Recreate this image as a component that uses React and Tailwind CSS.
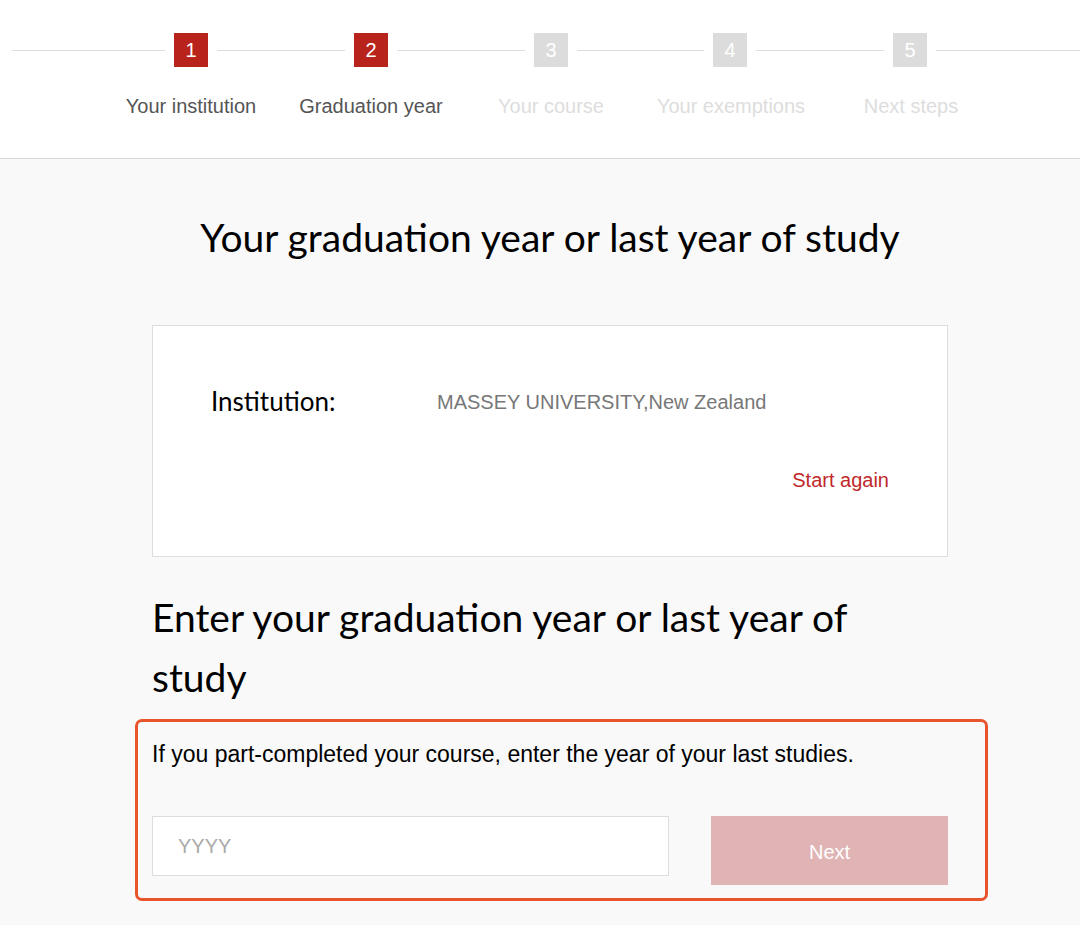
import React from 'react'

const steps = [
    { n: 1, label: 'Your institution', done: true },
    { n: 2, label: 'Graduation year', done: true },
    { n: 3, label: 'Your course', done: false },
    { n: 4, label: 'Your exemptions', done: false },
    { n: 5, label: 'Next steps', done: false },
]

const helv = { fontFamily: '"Liberation Sans", Arial, sans-serif' }
const avenir = { fontFamily: 'Lato, "Noto Sans", sans-serif' }

const StepBox = ({ step }) => (
    <div
        className={`w-[34px] h-[34px] flex items-center justify-center text-[20px] text-white flex-shrink-0 ${step.done ? 'bg-[#b8241c]' : 'bg-[#dcdcdc]'}`}
    >
        {step.n}
    </div>
)

const Line = ({ className }) => <div className={`h-px bg-[#dedede] ${className}`} />

export default function App() {
    return (
        <div className="min-h-[925px] bg-[#f9f9f9]" style={helv}>
            {/* Stepper */}
            <header className="bg-white border-b border-[#d8d8d8] h-[159px] pt-[33px]">
                <div className="flex items-center gap-[9px] pl-[12px]">
                    <Line className="w-[153px]" />
                    <StepBox step={steps[0]} />
                    <Line className="w-[128px]" />
                    <StepBox step={steps[1]} />
                    <Line className="w-[128px]" />
                    <StepBox step={steps[2]} />
                    <Line className="w-[127px]" />
                    <StepBox step={steps[3]} />
                    <Line className="w-[128px]" />
                    <StepBox step={steps[4]} />
                    <Line className="flex-1" />
                </div>
                <div className="flex ml-[101px] mt-[27px]">
                    {steps.map((s) => (
                        <div
                            key={s.n}
                            className={`w-[180px] text-center text-[20px] leading-[24px] whitespace-nowrap ${s.done ? 'text-[#555555]' : 'text-[#dddddd]'}`}
                        >
                            {s.label}
                        </div>
                    ))}
                </div>
            </header>

            <main className="w-[796px] ml-[152px]">
                <h1 className="text-center text-[39px] text-black pt-[54px] leading-[48px] whitespace-nowrap" style={avenir}>
                    Your graduation year or last year of study
                </h1>

                {/* Selected institution */}
                <div className="mt-[64px] bg-white border border-[#dddddd] h-[232px] pl-[58px] pr-[58px] pt-[56px]">
                    <div className="flex items-center">
                        <span className="w-[226px] text-[26px] text-black" style={avenir}>Institution:</span>
                        <span className="text-[20px] text-[#777777]">MASSEY UNIVERSITY,New Zealand</span>
                    </div>
                    <div className="flex justify-end mt-[44px]">
                        <a href="#" className="text-[20px] text-[#c0282b]">Start again</a>
                    </div>
                </div>

                <h2 className="mt-[30px] text-[39px] leading-[60px] text-black" style={avenir}>
                    Enter your graduation year or last year of<br />study
                </h2>
            </main>

            {/* Year form */}
            <div className="w-[853px] ml-[135px] mt-[12px] border-[3px] border-[#e8552d] rounded-[7px] pl-[14px] pr-[37px] pt-[18px] pb-[13px]">
                <p className="text-[23px] text-black leading-[28px] whitespace-nowrap">
                    If you part-completed your course, enter the year of your last studies.
                </p>
                <div className="flex items-start justify-between mt-[48px]">
                    <input
                        placeholder="YYYY"
                        className="w-[517px] h-[60px] bg-white border border-[#dddddd] px-[25px] text-[20px] placeholder:text-[#aaaaaa] outline-none"
                    />
                    <button className="w-[237px] h-[69px] bg-[#e0b4b4] text-white text-[20px] pt-[2px]">
                        Next
                    </button>
                </div>
            </div>
        </div>
    )
}
